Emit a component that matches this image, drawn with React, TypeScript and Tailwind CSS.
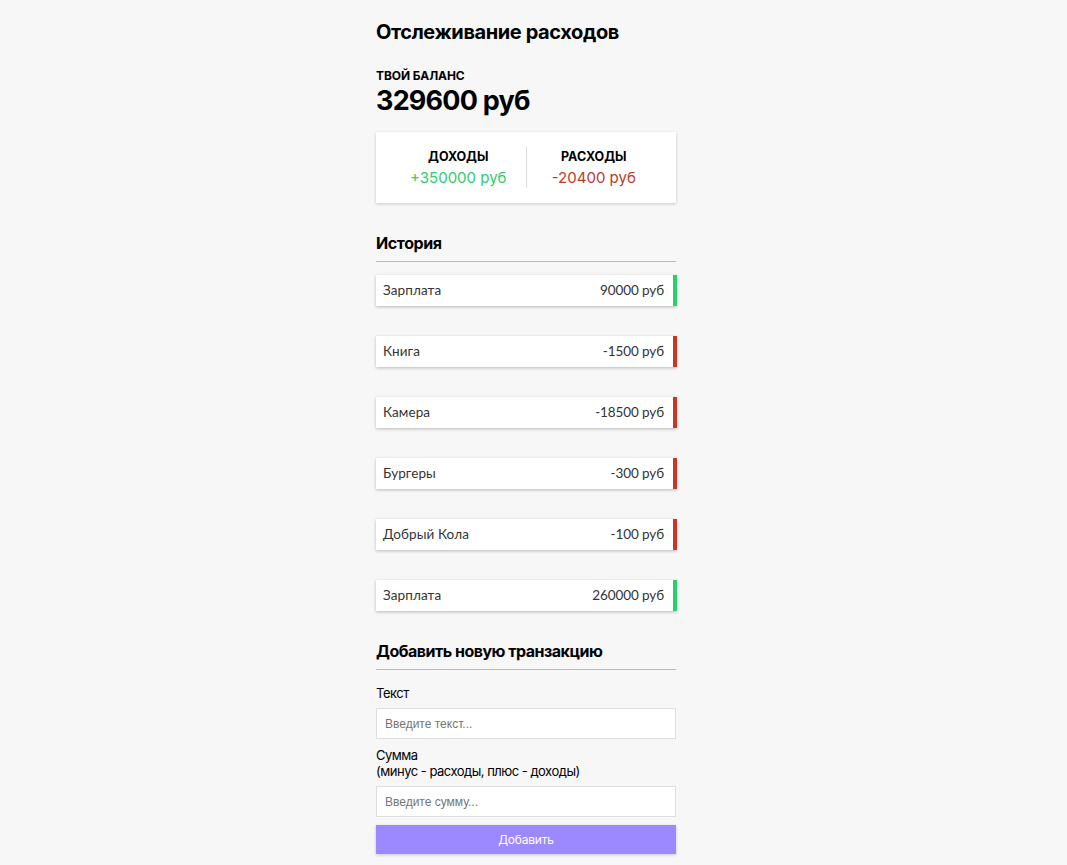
import React from "react";

const items = [
  { text: "Зарплата", amount: "90000 руб", plus: true },
  { text: "Книга", amount: "-1500 руб", plus: false },
  { text: "Камера", amount: "-18500 руб", plus: false },
  { text: "Бургеры", amount: "-300 руб", plus: false },
  { text: "Добрый Кола", amount: "-100 руб", plus: false },
  { text: "Зарплата", amount: "260000 руб", plus: true },
];

export default function App() {
  return (
    <div className="min-h-[865px] w-full bg-[#f7f7f7] flex justify-center pr-[15px] font-['Inter',sans-serif] text-black">
      <div className="w-[300px] pt-[20px] pb-[10px] flex flex-col">
        <h1 className="text-[20px] leading-[24px] font-bold tracking-[-0.4px]">Отслеживание расходов</h1>
        <h4 className="mt-[24px] text-[12px] leading-[15px] font-bold uppercase tracking-[-0.1px]">Твой баланс</h4>
        <div className="text-[27px] leading-[32px] font-bold mt-[2px] tracking-[-0.8px]">329600 руб</div>

        <div className="mt-[15px] bg-white h-[71px] shadow-[0_1px_3px_rgba(0,0,0,0.2)] flex items-center justify-center">
          <div className="flex-1 flex flex-col items-center pl-[15px]">
            <div className="text-[12.5px] leading-[16px] font-bold uppercase">Доходы</div>
            <div className="mt-[4px] text-[15px] leading-[18px] tracking-[0px] text-[#2ecc71]">+350000 руб</div>
          </div>
          <div className="w-px h-[41px] bg-[#dedede]" />
          <div className="flex-1 flex flex-col items-center pr-[15px]">
            <div className="text-[12.5px] leading-[16px] font-bold uppercase">Расходы</div>
            <div className="mt-[4px] text-[15px] leading-[18px] tracking-[0px] text-[#c0392b]">-20400 руб</div>
          </div>
        </div>

        <h3 className="mt-[30px] text-[16px] leading-[20px] font-bold pb-[8px] border-b border-[#bbbbbb] tracking-[-0.4px]">История</h3>

        <ul className="mt-[13px] flex flex-col gap-[30px] font-['Lato',sans-serif] text-[#333]">
          {items.map((it, i) => (
            <li
              key={i}
              className={`bg-white h-[31px] flex items-center justify-between pl-[7px] pr-[9px] shadow-[0_1px_3px_rgba(0,0,0,0.25)] border-r-[4px] w-[301px] ${
                it.plus ? "border-[#2ecc71]" : "border-[#c0392b]"
              }`}
            >
              <span className="text-[13.5px] tracking-[0.1px]">{it.text}</span>
              <span className="text-[13.5px] tracking-[-0.1px]">{it.amount}</span>
            </li>
          ))}
        </ul>

        <h3 className="mt-[30px] text-[16px] leading-[20px] font-bold pb-[8px] border-b border-[#bbbbbb] tracking-[-0.5px]">Добавить новую транзакцию</h3>

        <div className="mt-[15px] text-[13px] leading-[16px] tracking-[-0.5px]">Текст</div>
        <input
          className="mt-[7px] h-[31px] w-full bg-white border border-[#dedede] px-[8px] text-[12px] font-['Liberation_Sans',sans-serif] placeholder:text-[#757575] outline-none"
          placeholder="Введите текст..."
        />
        <div className="mt-[8px] text-[13px] leading-[16px] tracking-[-0.5px]">
          Сумма
          <br />
          (минус - расходы, плюс - доходы)
        </div>
        <input
          className="mt-[7px] h-[31px] w-full bg-white border border-[#dedede] px-[8px] text-[12px] font-['Liberation_Sans',sans-serif] placeholder:text-[#757575] outline-none"
          placeholder="Введите сумму..."
        />
        <button className="mt-[8px] h-[29px] w-full bg-[#9c88ff] text-white text-[12px] shadow-[0_1px_3px_rgba(0,0,0,0.2)] tracking-[-0.2px]">
          Добавить
        </button>
      </div>
    </div>
  );
}
